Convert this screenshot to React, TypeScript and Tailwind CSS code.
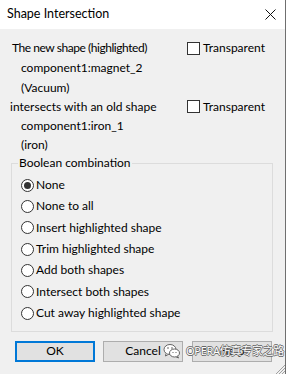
import React, { useState } from "react";

const font = { fontFamily: 'Lato, "Noto Sans", "Noto Sans CJK SC", sans-serif' };

const CheckBox = ({ label }: { label: string }) => {
  const [checked, setChecked] = useState(false);
  return (
    <label className="flex items-center cursor-default select-none" onClick={() => setChecked(!checked)}>
      <span className="w-[13px] h-[13px] border border-[#333333] bg-white flex items-center justify-center">
        {checked && (
          <svg width="9" height="9" viewBox="0 0 9 9">
            <path d="M1 4.5 L3.5 7 L8 1.5" stroke="#333" strokeWidth="1.3" fill="none" />
          </svg>
        )}
      </span>
      <span className="ml-[3px]">{label}</span>
    </label>
  );
};

const options = [
  "None",
  "None to all",
  "Insert highlighted shape",
  "Trim highlighted shape",
  "Add both shapes",
  "Intersect both shapes",
  "Cut away highlighted shape",
];

const App = () => {
  const [choice, setChoice] = useState(0);

  return (
    <div
      className="relative w-[286px] h-[374px] bg-[#f0f0f0] border-r border-[#6f6f6f] overflow-hidden text-[12px] text-black"
      style={font}
    >
      {/* title bar */}
      <div className="h-[29px] bg-white flex items-center justify-between pl-[7px] pr-[9px]">
        <span className="text-[12.5px]">Shape Intersection</span>
        <svg width="11" height="11" viewBox="0 0 11 11">
          <path d="M0.5 0.5 L10.5 10.5 M10.5 0.5 L0.5 10.5" stroke="#111" strokeWidth="1" />
        </svg>
      </div>

      {/* shapes info */}
      <div className="pt-[9px] flex flex-col">
        <div className="h-[20px] flex items-center">
          <span className="w-[187px] pl-[12px] tracking-[-0.45px]">The new shape (highlighted)</span>
          <CheckBox label="Transparent" />
        </div>
        <div className="h-[20px] flex items-center pl-[21px]">component1:magnet_2</div>
        <div className="h-[19px] flex items-center pl-[21px]">(Vacuum)</div>
        <div className="h-[19px] flex items-center">
          <span className="w-[187px] pl-[10px]">intersects with an old shape</span>
          <CheckBox label="Transparent" />
        </div>
        <div className="h-[19px] flex items-center pl-[21px]">component1:iron_1</div>
        <div className="h-[19px] flex items-center pl-[21px]">(iron)</div>
      </div>

      {/* boolean combination group */}
      <fieldset className="mt-[1px] ml-[11px] w-[262px] border border-[#dcdcdc] pl-[9px] pt-[3.5px] pb-[7px]">
        <legend className="ml-[-3px] px-[1px] leading-[16px]">Boolean combination</legend>
        <div className="grid auto-rows-[21.33px]">
          {options.map((opt, i) => (
            <label key={opt} className="flex items-center cursor-default select-none" onClick={() => setChoice(i)}>
              <span className="w-[13px] h-[13px] rounded-full border border-[#333333] bg-white flex items-center justify-center">
                {choice === i && <span className="w-[7px] h-[7px] rounded-full bg-[#333333]" />}
              </span>
              <span className="ml-[2px]">{opt}</span>
            </label>
          ))}
        </div>
      </fieldset>

      {/* buttons */}
      <div className="mt-[9px] ml-[15px] flex">
        <button className="w-[80px] h-[21px] border-2 border-[#0078d7] bg-[#e1e1e1] flex items-center justify-center">
          OK
        </button>
        <button className="ml-[8px] w-[80px] h-[21px] border border-[#adadad] bg-[#e1e1e1] flex items-center justify-center">
          Cancel
        </button>
        <button className="ml-[9px] w-[80px] h-[21px] border border-[#adadad] bg-[#e1e1e1] flex items-center justify-center">
          Help
        </button>
      </div>

      {/* watermark */}
      <div className="absolute left-[163px] top-[343px] flex items-center">
        <svg width="18" height="16" viewBox="0 0 18 16">
          <ellipse cx="7" cy="6.5" rx="6" ry="5" fill="#fff" stroke="#555" strokeWidth="0.9" />
          <path d="M3 10.5 L2.5 13 L5.5 11.3" fill="#fff" stroke="#555" strokeWidth="0.9" />
          <ellipse cx="11.5" cy="10" rx="5" ry="4" fill="#fff" stroke="#555" strokeWidth="0.9" />
          <path d="M14.5 13 L15.5 15 L13 13.8" fill="#fff" stroke="#555" strokeWidth="0.9" />
          <circle cx="5" cy="5" r="0.8" fill="#555" />
          <circle cx="9" cy="5" r="0.8" fill="#555" />
          <circle cx="10" cy="9.5" r="0.6" fill="#555" />
          <circle cx="13" cy="9.5" r="0.6" fill="#555" />
        </svg>
        <span
          className="ml-[5px] text-[11px] text-white tracking-[-0.3px] [text-shadow:0.7px_0_#666,-0.7px_0_#666,0_0.7px_#666,0_-0.7px_#666]"
          style={{ fontFamily: '"Noto Sans", "Noto Sans CJK SC", sans-serif' }}
        >
          OPERA仿真专家之路
        </span>
      </div>

      {/* resize grip */}
      <svg className="absolute right-0 bottom-0" width="11" height="11" viewBox="0 0 11 11">
        <path d="M11 2 L2 11 M11 5 L5 11 M11 8 L8 11" stroke="#a0a0a0" strokeWidth="1" />
      </svg>
    </div>
  );
};

export default App;
